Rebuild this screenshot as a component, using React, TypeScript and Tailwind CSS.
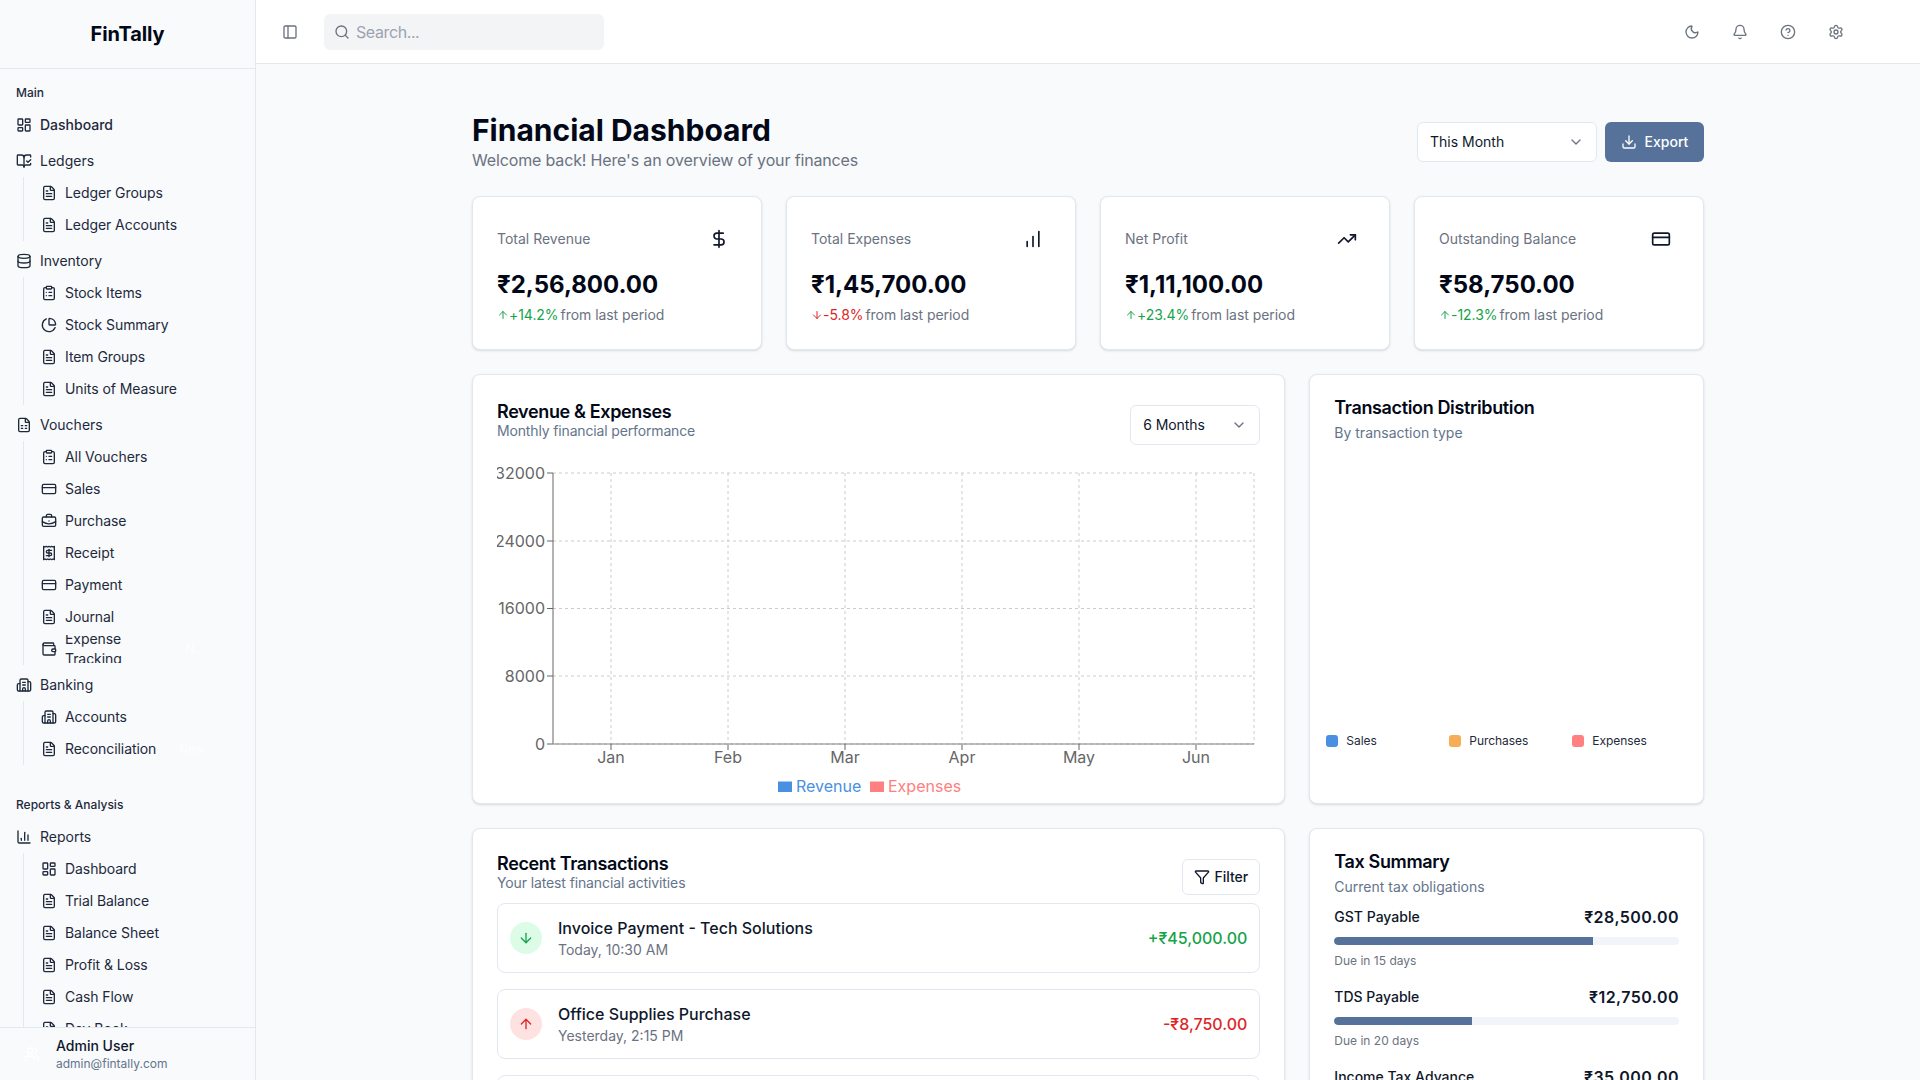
import React from "react";
import {
  ArrowDown,
  ArrowUp,
  Bell,
  BookOpenCheck,
  BriefcaseBusiness,
  Building2,
  ChartColumn,
  ChartNoAxesColumnIncreasing,
  ChartPie,
  ChevronDown,
  CircleHelp,
  ClipboardList,
  CreditCard,
  Database,
  DollarSign,
  Download,
  FileSpreadsheet,
  FileText,
  Filter,
  LayoutDashboard,
  Moon,
  PanelLeft,
  Receipt,
  Search,
  Settings,
  TrendingUp,
  Users,
  Wallet,
} from "lucide-react";

const nav = [
  {
    label: "Main",
    items: [
      { name: "Dashboard", icon: LayoutDashboard },
      {
        name: "Ledgers",
        icon: BookOpenCheck,
        sub: [
          { name: "Ledger Groups", icon: FileText },
          { name: "Ledger Accounts", icon: FileText },
        ],
      },
      {
        name: "Inventory",
        icon: Database,
        sub: [
          { name: "Stock Items", icon: ClipboardList },
          { name: "Stock Summary", icon: ChartPie },
          { name: "Item Groups", icon: FileText },
          { name: "Units of Measure", icon: FileText },
        ],
      },
      {
        name: "Vouchers",
        icon: FileSpreadsheet,
        sub: [
          { name: "All Vouchers", icon: ClipboardList },
          { name: "Sales", icon: CreditCard },
          { name: "Purchase", icon: BriefcaseBusiness },
          { name: "Receipt", icon: Receipt },
          { name: "Payment", icon: CreditCard },
          { name: "Journal", icon: FileText },
          { name: "Expense Tracking", icon: Wallet, badge: "N..", wrap: true },
        ],
      },
      {
        name: "Banking",
        icon: Building2,
        sub: [
          { name: "Accounts", icon: Building2 },
          { name: "Reconciliation", icon: FileText, badge: "New" },
        ],
      },
    ],
  },
  {
    label: "Reports & Analysis",
    items: [
      {
        name: "Reports",
        icon: ChartColumn,
        sub: [
          { name: "Dashboard", icon: LayoutDashboard },
          { name: "Trial Balance", icon: FileText },
          { name: "Balance Sheet", icon: FileText },
          { name: "Profit & Loss", icon: FileText },
          { name: "Cash Flow", icon: FileText },
          { name: "Day Book", icon: FileText },
        ],
      },
    ],
  },
];

const stats = [
  { title: "Total Revenue", value: "₹2,56,800.00", change: "+14.2%", up: true, icon: DollarSign },
  { title: "Total Expenses", value: "₹1,45,700.00", change: "-5.8%", up: false, icon: ChartNoAxesColumnIncreasing },
  { title: "Net Profit", value: "₹1,11,100.00", change: "+23.4%", up: true, icon: TrendingUp },
  { title: "Outstanding Balance", value: "₹58,750.00", change: "-12.3%", up: true, icon: CreditCard },
];

const transactions = [
  { name: "Invoice Payment - Tech Solutions", date: "Today, 10:30 AM", amount: "+₹45,000.00", income: true },
  { name: "Office Supplies Purchase", date: "Yesterday, 2:15 PM", amount: "-₹8,750.00", income: false },
  { name: "Client Payment - Global Corp", date: "Yesterday, 11:00 AM", amount: "+₹32,500.00", income: true },
];

const taxes = [
  { name: "GST Payable", amount: "₹28,500.00", bar: 75, due: "Due in 15 days" },
  { name: "TDS Payable", amount: "₹12,750.00", bar: 40, due: "Due in 20 days" },
  { name: "Income Tax Advance", amount: "₹35,000.00", bar: 60, due: "Due in 30 days" },
];

const Sidebar = () => (
  <aside className="flex h-full w-[256px] shrink-0 flex-col border-r border-[#e2e8f0] bg-[#f8fafc]">
    <div className="flex h-[69px] shrink-0 items-center justify-center border-b border-[#e2e8f0]">
      <span className="text-xl font-bold tracking-[-0.1px] text-[#020817]">FinTally</span>
    </div>
    <div className="flex min-h-0 flex-1 flex-col gap-2 overflow-hidden">
      {nav.map((group) => (
        <div key={group.label} className="p-2">
          <div className="flex h-8 items-center px-2 text-xs font-medium text-[#1e293b]">{group.label}</div>
          <ul className="flex flex-col gap-1">
            {group.items.map((item) => (
              <li key={item.name}>
                <div className="flex h-8 items-center gap-2 p-2 text-sm text-[#1e293b]">
                  <item.icon className="h-4 w-4 shrink-0" />
                  <span className={item.name === "Dashboard" ? "font-medium" : ""}>{item.name}</span>
                </div>
                {item.sub && (
                  <ul className="mx-3.5 flex translate-x-px flex-col gap-1 border-l border-[#e2e8f0] py-0.5 pr-2.5 pl-[9px]">
                    {item.sub.map((s) => (
                      <li
                        key={s.name}
                        className="flex h-7 items-center gap-2 overflow-hidden px-2 text-sm tracking-[-0.07px] text-[#1e293b]"
                      >
                        <s.icon className="h-4 w-4 shrink-0" />
                        <span className={s.wrap ? "w-[90px] shrink-0" : "shrink-0"}>{s.name}</span>
                        {s.badge && (
                          <span className={`${s.wrap ? "ml-[22px]" : "ml-[15px]"} text-xs text-white`}>{s.badge}</span>
                        )}
                      </li>
                    ))}
                  </ul>
                )}
              </li>
            ))}
          </ul>
        </div>
      ))}
    </div>
    <div className="flex h-[53px] shrink-0 items-center gap-4 border-t border-[#e2e8f0] bg-[#f8fafc] pl-6">
      <Users className="h-4 w-4 text-white" />
      <div className="flex flex-col">
        <span className="text-sm leading-5 font-medium text-[#0f172a]">Admin User</span>
        <span className="text-xs leading-4 text-[#64748b]">admin@fintally.com</span>
      </div>
    </div>
  </aside>
);

const Topbar = () => (
  <header className="flex h-[64px] shrink-0 items-center border-b border-[#e5e7eb] bg-white pr-[66px] pl-4">
    <button className="flex h-9 w-9 items-center justify-center text-[#6b7280]">
      <PanelLeft className="h-4 w-4" />
    </button>
    <div className="ml-4 flex h-9 w-[280px] items-center gap-[6px] rounded-md bg-[#f3f4f6] pl-[10px]">
      <Search className="h-4 w-4 text-[#6b7280]" />
      <span className="text-base tracking-[-0.4px] text-[#9ca3af]">Search...</span>
    </div>
    <div className="ml-auto flex items-center gap-3">
      {[Moon, Bell, CircleHelp, Settings].map((Icon, i) => (
        <button key={i} className="flex h-9 w-9 items-center justify-center text-[#6b7280]">
          <Icon className="h-4 w-4" />
        </button>
      ))}
    </div>
  </header>
);

const StatCard = ({ s }: { s: (typeof stats)[number] }) => (
  <div className="rounded-lg border border-[#e2e8f0] bg-white p-6 shadow-sm">
    <div className="mb-3 flex h-9 items-center justify-between">
      <span className="text-sm text-[#6b7280]">{s.title}</span>
      <span className="p-2 text-[#0f172a]">
        <s.icon className="h-5 w-5" />
      </span>
    </div>
    <div className="text-2xl font-bold text-[#020817]">{s.value}</div>
    <div className="mt-1 flex items-center text-sm tracking-[-0.05px] text-[#6b7280]">
      {s.up ? (
        <ArrowUp className="h-3 w-3 text-[#16a34a]" />
      ) : (
        <ArrowDown className="h-3 w-3 text-[#dc2626]" />
      )}
      <span className={s.up ? "text-[#16a34a]" : "text-[#dc2626]"}>{s.change}</span>
      <span className="ml-[2px]">from last period</span>
    </div>
  </div>
);

const yTicks = [
  { label: "32000", y: 16 },
  { label: "24000", y: 84 },
  { label: "16000", y: 151.5 },
  { label: "8000", y: 219 },
  { label: "0", y: 287 },
];
const xTicks = [
  { label: "Jan", x: 114 },
  { label: "Feb", x: 231 },
  { label: "Mar", x: 348 },
  { label: "Apr", x: 465 },
  { label: "May", x: 582 },
  { label: "Jun", x: 699 },
];

const RevenueChart = () => (
  <svg width="763" height="343" className="mt-3 block" fontFamily="Inter, sans-serif" fontSize="16">
    {yTicks.map((t) => (
      <g key={t.label}>
        {t.y !== 287 && (
          <line x1="56" x2="757" y1={t.y} y2={t.y} stroke="#ccc" strokeDasharray="3 3" />
        )}
        <line x1="50" x2="56" y1={t.y} y2={t.y} stroke="#666" />
        <text x="48" y={t.y + 5.5} textAnchor="end" fill="#666">
          {t.label}
        </text>
      </g>
    ))}
    {xTicks.map((t) => (
      <g key={t.label}>
        <line x1={t.x} x2={t.x} y1="16" y2="287" stroke="#ccc" strokeDasharray="3 3" />
        <line x1={t.x} x2={t.x} y1="287" y2="293" stroke="#666" />
        <text x={t.x} y="306" textAnchor="middle" fill="#666">
          {t.label}
        </text>
      </g>
    ))}
    <line x1="757" x2="757" y1="16" y2="287" stroke="#ccc" strokeDasharray="3 3" />
    <line x1="56" x2="56" y1="16" y2="287" stroke="#666" />
    <line x1="56" x2="757" y1="287" y2="287" stroke="#666" />
    <line x1="56" x2="757" y1="287" y2="287" stroke="#ccc" strokeDasharray="3 3" />
    <rect x="281" y="324.5" width="14" height="10.5" fill="#4a90e2" />
    <text x="299" y="335" fill="#4a90e2">
      Revenue
    </text>
    <rect x="373" y="324.5" width="14" height="10.5" fill="#ff8080" />
    <text x="391" y="335" fill="#ff8080">
      Expenses
    </text>
  </svg>
);

export default function App() {
  return (
    <div className="flex h-screen w-full overflow-hidden bg-[#f8fafc] font-['Inter',sans-serif] text-[#0f172a]">
      <Sidebar />
      <div className="flex min-w-0 flex-1 flex-col">
        <Topbar />
        <main className="min-h-0 flex-1 overflow-hidden">
          <div className="mx-auto max-w-7xl px-6 py-12">
            <div className="mb-6 flex items-center justify-between">
              <div>
                <h1 className="text-3xl font-bold text-[#020817]">Financial Dashboard</h1>
                <p className="text-base tracking-[-0.15px] text-[#6b7280]">
                  Welcome back! Here's an overview of your finances
                </p>
              </div>
              <div className="flex items-center gap-2">
                <div className="flex h-10 w-[180px] items-center justify-between rounded-md border border-[#e2e8f0] bg-white px-3 text-sm text-[#0f172a]">
                  This Month
                  <ChevronDown className="h-4 w-4 text-[#6b7280]" />
                </div>
                <button className="flex h-10 w-[99px] items-center justify-center gap-2 rounded-md bg-[#56729a] text-sm font-medium text-white">
                  <Download className="h-4 w-4" />
                  Export
                </button>
              </div>
            </div>

            <div className="mb-6 grid grid-cols-4 gap-6">
              {stats.map((s) => (
                <StatCard key={s.title} s={s} />
              ))}
            </div>

            <div className="mb-6 grid grid-cols-3 gap-6">
              <div className="col-span-2 h-[430px] rounded-lg border border-[#e2e8f0] bg-white px-6 pt-6 shadow-sm">
                <div className="flex justify-between">
                  <div className="mt-1">
                    <h3 className="text-lg leading-none font-semibold tracking-[-0.36px] text-[#020817]">
                      Revenue &amp; Expenses
                    </h3>
                    <p className="text-sm leading-5 tracking-[-0.15px] text-[#64748b]">Monthly financial performance</p>
                  </div>
                  <div className="mt-1.5 flex h-10 w-[130px] items-center justify-between rounded-md border border-[#e2e8f0] bg-white px-3 text-sm tracking-[-0.1px]">
                    6 Months
                    <ChevronDown className="h-4 w-4 text-[#6b7280]" />
                  </div>
                </div>
                <RevenueChart />
              </div>
              <div className="flex h-[430px] flex-col rounded-lg border border-[#e2e8f0] bg-white shadow-sm">
                <div className="px-6 pt-6">
                  <h3 className="text-lg leading-none font-semibold tracking-[-0.36px] text-[#020817]">
                    Transaction Distribution
                  </h3>
                  <p className="mt-1.5 text-sm leading-5 text-[#64748b]">By transaction type</p>
                </div>
                <div className="mt-[290px] grid w-[385px] grid-cols-3 pl-4 text-xs tracking-[-0.05px] text-[#1e293b]">
                  {[
                    { n: "Sales", c: "bg-[#4a90e2]" },
                    { n: "Purchases", c: "bg-[#f6ad55]" },
                    { n: "Expenses", c: "bg-[#ff8080]" },
                  ].map((l) => (
                    <div key={l.n} className="flex items-center gap-2">
                      <span className={`h-3 w-3 rounded-[3px] ${l.c}`} />
                      {l.n}
                    </div>
                  ))}
                </div>
              </div>
            </div>

            <div className="grid grid-cols-3 gap-6">
              <div className="col-span-2 rounded-lg border border-[#e2e8f0] bg-white p-6 shadow-sm">
                <div className="flex justify-between">
                  <div className="mt-0.5">
                    <h3 className="text-lg leading-none font-semibold tracking-[-0.36px] text-[#020817]">
                      Recent Transactions
                    </h3>
                    <p className="text-sm leading-5 tracking-[-0.12px] text-[#64748b]">
                      Your latest financial activities
                    </p>
                  </div>
                  <button className="mt-1.5 flex h-9 w-[78px] items-center justify-center gap-1 rounded-md border border-[#e2e8f0] bg-white text-sm font-medium">
                    <Filter className="h-4 w-4" />
                    Filter
                  </button>
                </div>
                <div className="mt-2 flex flex-col gap-4">
                  {transactions.map((t) => (
                    <div
                      key={t.name}
                      className="flex items-center justify-between rounded-lg border border-[#e2e8f0] p-3"
                    >
                      <div className="flex items-center gap-4">
                        <span
                          className={`flex h-8 w-8 items-center justify-center rounded-full ${
                            t.income ? "bg-[#dcfce7] text-[#16a34a]" : "bg-[#fee2e2] text-[#dc2626]"
                          }`}
                        >
                          {t.income ? <ArrowDown className="h-4 w-4" /> : <ArrowUp className="h-4 w-4" />}
                        </span>
                        <div>
                          <div className="text-base font-medium text-[#0f172a]">{t.name}</div>
                          <div className="text-sm text-[#6b7280]">{t.date}</div>
                        </div>
                      </div>
                      <span className={`text-base font-medium ${t.income ? "text-[#16a34a]" : "text-[#dc2626]"}`}>
                        {t.amount}
                      </span>
                    </div>
                  ))}
                </div>
              </div>
              <div className="rounded-lg border border-[#e2e8f0] bg-white p-6 shadow-sm">
                <h3 className="text-lg leading-none font-semibold tracking-[-0.36px] text-[#020817]">Tax Summary</h3>
                <p className="mt-1.5 text-sm leading-5 text-[#64748b]">Current tax obligations</p>
                <div className="mt-2 flex flex-col gap-4">
                  {taxes.map((t) => (
                    <div key={t.name}>
                      <div className="flex items-center justify-between">
                        <span className="text-sm font-medium text-[#0f172a]">{t.name}</span>
                        <span className="text-base font-semibold tracking-[0.45px] text-[#0f172a]">{t.amount}</span>
                      </div>
                      <div className="mt-2 h-2 w-full overflow-hidden rounded-full bg-[#f1f5f9]">
                        <div className="h-full rounded-l-full bg-[#56729a]" style={{ width: `${t.bar}%` }} />
                      </div>
                      <div className="mt-2 text-xs text-[#6b7280]">{t.due}</div>
                    </div>
                  ))}
                </div>
              </div>
            </div>
          </div>
        </main>
      </div>
    </div>
  );
}
